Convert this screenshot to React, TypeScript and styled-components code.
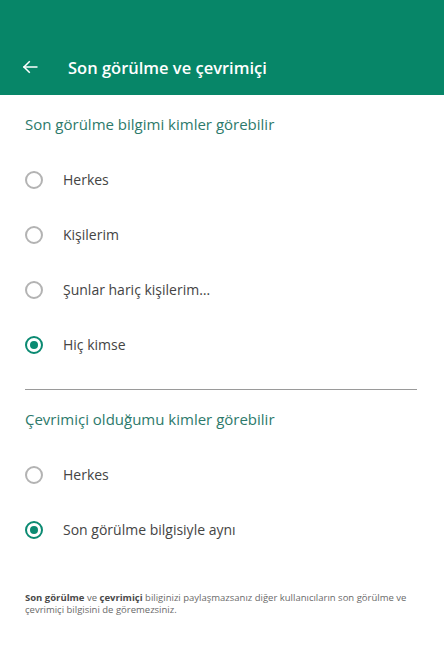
import React from 'react'
import styled, { createGlobalStyle } from 'styled-components'

const Global = createGlobalStyle`
    html, body {
        margin: 0;
        padding: 0;
        background: #ffffff;
    }
    body {
        font-family: "Open Sans", "Noto Sans", sans-serif;
        -webkit-font-smoothing: antialiased;
    }
`

const Page = styled.div`
    width: 444px;
    min-height: 649px;
    background: #fff;
`

const Header = styled.header`
    height: 95px;
    box-sizing: border-box;
    background: #078668;
    display: flex;
    align-items: flex-end;
    padding: 0 0 16px 20px;
`

const HeaderRow = styled.div`
    display: flex;
    align-items: center;
    height: 24px;
`

const BackButton = styled.button`
    width: 20px;
    height: 20px;
    padding: 0;
    border: none;
    background: none;
    display: flex;
    align-items: center;
    justify-content: center;
    margin-right: 28px;
    cursor: pointer;
`

const Title = styled.h1`
    margin: 0;
    font-size: 16.5px;
    font-weight: 600;
    color: #ffffff;
`

const Section = styled.section`
    padding: 19px 27px 0 25px;
`

const SectionTitle = styled.h2`
    margin: 0 0 18px;
    font-size: 15px;
    line-height: 20px;
    font-weight: 400;
    color: #2d7a6b;
`

const Options = styled.div`
    display: flex;
    flex-direction: column;
`

const Option = styled.label`
    height: 55px;
    display: flex;
    align-items: center;
    cursor: pointer;
`

const Radio = styled.span<{ $checked?: boolean }>`
    width: 18px;
    height: 18px;
    box-sizing: border-box;
    border-radius: 50%;
    border: 2px solid ${p => (p.$checked ? '#0b8a72' : '#b3b3b3')};
    display: flex;
    align-items: center;
    justify-content: center;
    margin-right: 20px;
    flex-shrink: 0;

    &::after {
        content: '';
        display: ${p => (p.$checked ? 'block' : 'none')};
        width: 8px;
        height: 8px;
        border-radius: 50%;
        background: #0b8a72;
    }
`

const OptionText = styled.span`
    font-size: 14px;
    color: #444444;
`

const Divider = styled.hr`
    margin: 17px 0 0;
    border: none;
    border-top: 1px solid #9a9a9a;
`

const Note = styled.p`
    margin: 35px 29px 0 25px;
    font-size: 9.5px;
    line-height: 12px;
    color: #6a6a6a;

    & b {
        color: #4a4a4a;
        font-weight: 700;
    }
`

const ArrowLeft = () => (
    <svg width="18" height="18" viewBox="0 0 24 24" fill="none" stroke="#fff" strokeWidth="2" strokeLinecap="square">
        <path d="M21 12H4" />
        <path d="M11 5l-7 7 7 7" />
    </svg>
)

type Choice = { label: string; checked?: boolean }

const lastSeen: Choice[] = [
    { label: 'Herkes' },
    { label: 'Kişilerim' },
    { label: 'Şunlar hariç kişilerim…' },
    { label: 'Hiç kimse', checked: true }
]

const online: Choice[] = [
    { label: 'Herkes' },
    { label: 'Son görülme bilgisiyle aynı', checked: true }
]

const ChoiceList = ({ items }: { items: Choice[] }) => (
    <Options>
        {items.map(item => (
            <Option key={item.label}>
                <Radio $checked={item.checked} />
                <OptionText>{item.label}</OptionText>
            </Option>
        ))}
    </Options>
)

export default function App() {
    return (
        <Page>
            <Global />
            <Header>
                <HeaderRow>
                    <BackButton aria-label="Geri">
                        <ArrowLeft />
                    </BackButton>
                    <Title>Son görülme ve çevrimiçi</Title>
                </HeaderRow>
            </Header>
            <Section>
                <SectionTitle>Son görülme bilgimi kimler görebilir</SectionTitle>
                <ChoiceList items={lastSeen} />
                <Divider />
            </Section>
            <Section>
                <SectionTitle>Çevrimiçi olduğumu kimler görebilir</SectionTitle>
                <ChoiceList items={online} />
            </Section>
            <Note>
                <b>Son görülme</b> ve <b>çevrimiçi</b> biliginizi paylaşmazsanız diğer kullanıcıların son görülme ve
                çevrimiçi bilgisini de göremezsiniz.
            </Note>
        </Page>
    )
}
